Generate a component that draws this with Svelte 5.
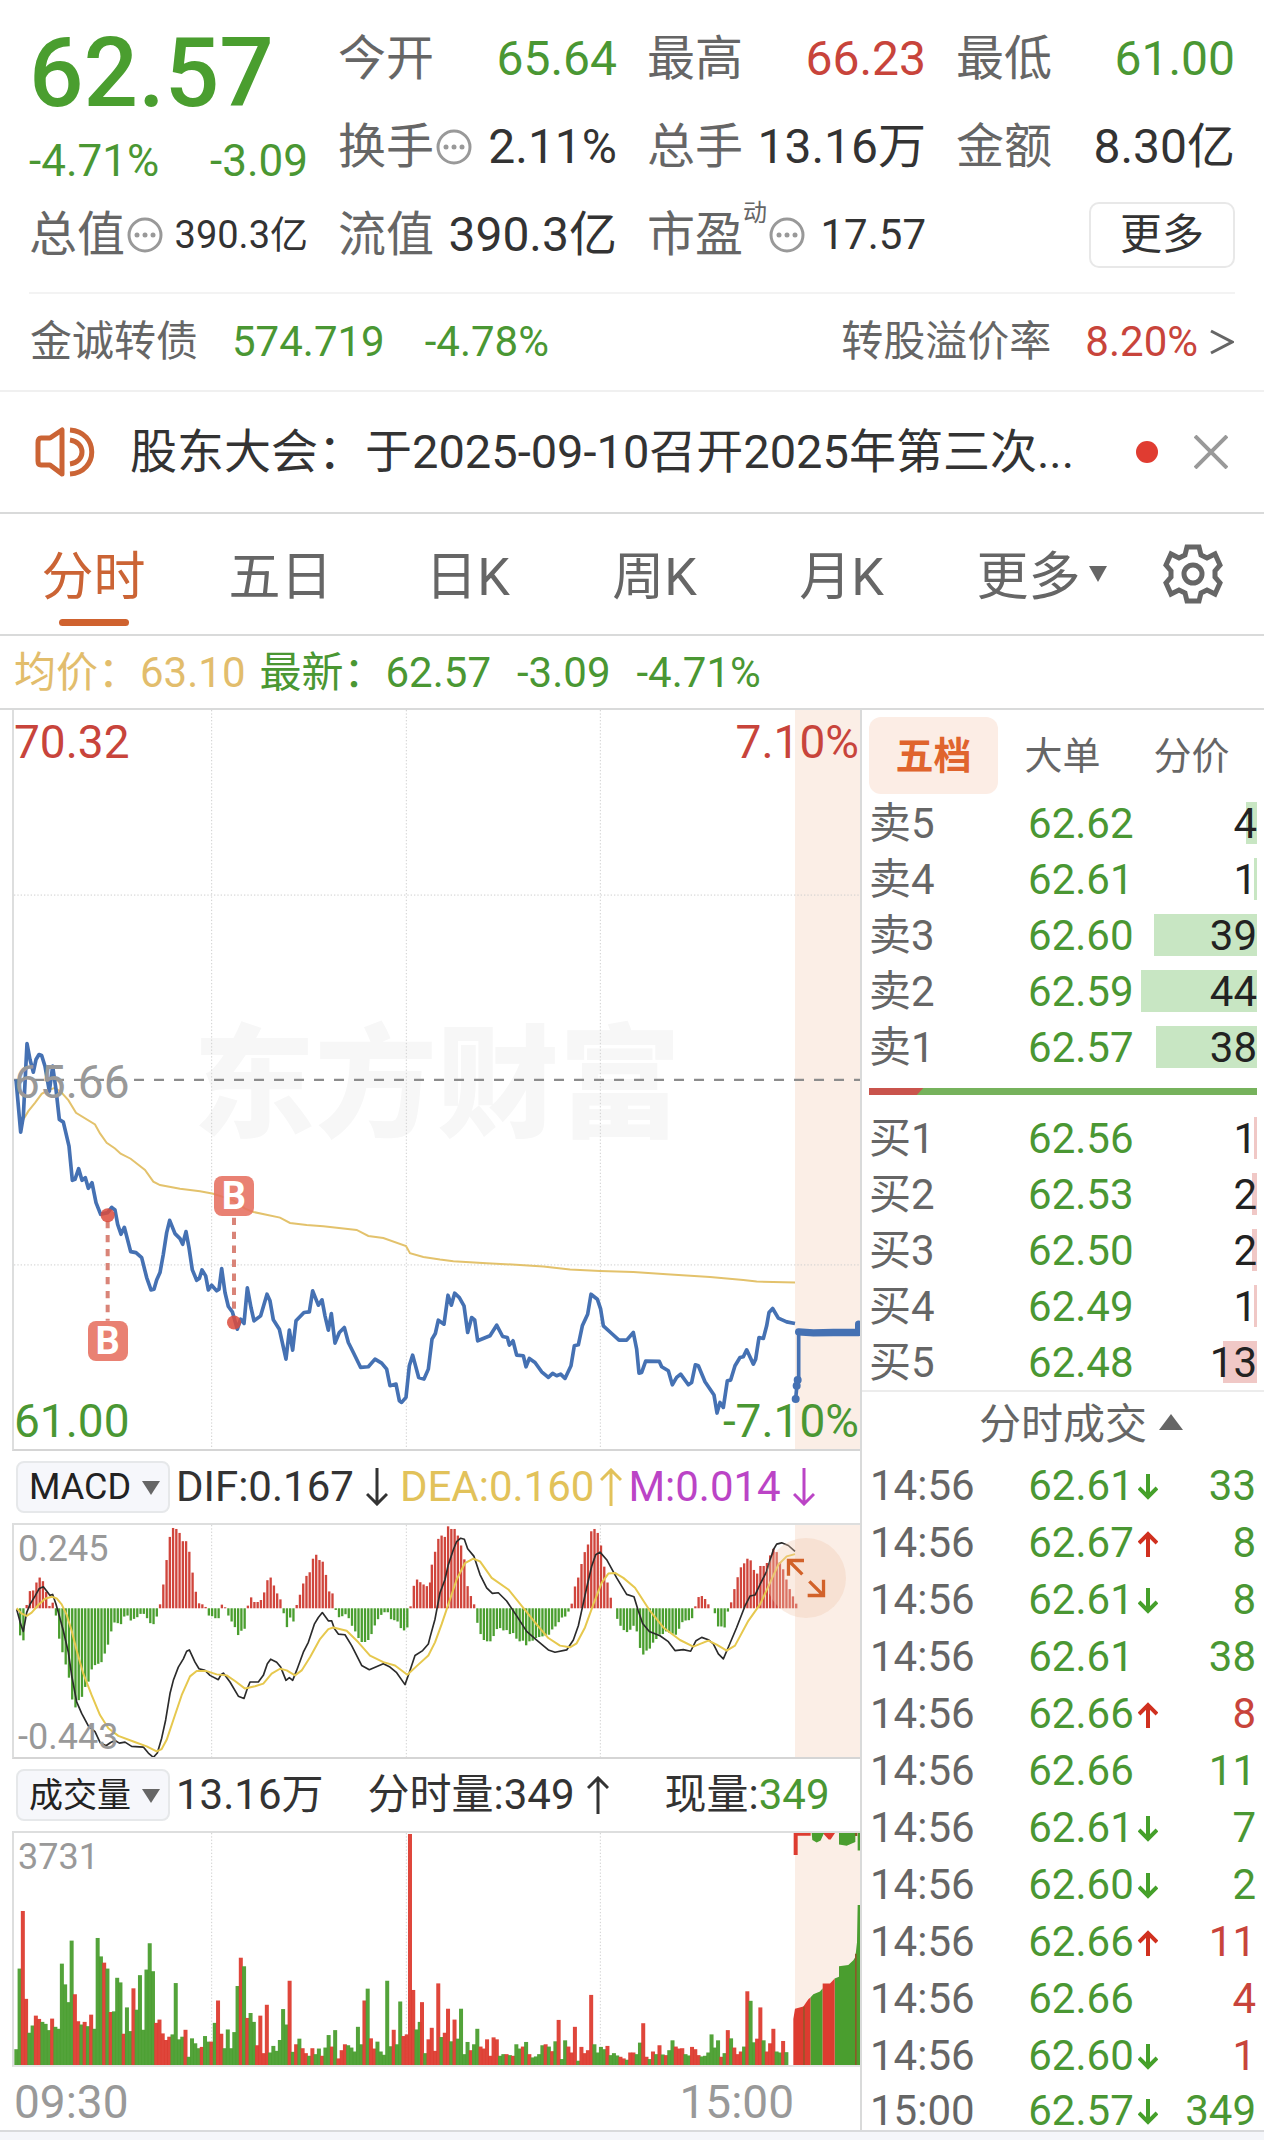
<script>
  const periods = ['分时', '五日', '日K', '周K', '月K'];
  const bookTabs = ['五档', '大单', '分价'];

  const asks = [
    { label: '卖5', price: '62.62', qty: 4 },
    { label: '卖4', price: '62.61', qty: 1 },
    { label: '卖3', price: '62.60', qty: 39 },
    { label: '卖2', price: '62.59', qty: 44 },
    { label: '卖1', price: '62.57', qty: 38 }
  ];
  const bids = [
    { label: '买1', price: '62.56', qty: 1 },
    { label: '买2', price: '62.53', qty: 2 },
    { label: '买3', price: '62.50', qty: 2 },
    { label: '买4', price: '62.49', qty: 1 },
    { label: '买5', price: '62.48', qty: 13 }
  ];
  const deepest = 44;

  const trades = [
    { time: '14:56', price: '62.61', move: 'fall', qty: 33, side: 'down' },
    { time: '14:56', price: '62.67', move: 'rise', qty: 8, side: 'down' },
    { time: '14:56', price: '62.61', move: 'fall', qty: 8, side: 'down' },
    { time: '14:56', price: '62.61', move: '', qty: 38, side: 'down' },
    { time: '14:56', price: '62.66', move: 'rise', qty: 8, side: 'up' },
    { time: '14:56', price: '62.66', move: '', qty: 11, side: 'down' },
    { time: '14:56', price: '62.61', move: 'fall', qty: 7, side: 'down' },
    { time: '14:56', price: '62.60', move: 'fall', qty: 2, side: 'down' },
    { time: '14:56', price: '62.66', move: 'rise', qty: 11, side: 'up' },
    { time: '14:56', price: '62.66', move: '', qty: 4, side: 'up' },
    { time: '14:56', price: '62.60', move: 'fall', qty: 1, side: 'up' },
    { time: '15:00', price: '62.57', move: 'fall', qty: 349, side: 'down' }
  ];

  // Chart samples are stored in thirds of a chart unit; the afternoon half starts at x = 1260.
  const AFTERNOON = 1260;
  const join = (am, pm) => {
    const read = (s, dx) => s.split(' ').map((p) => {
      const [x, y] = p.split(',').map(Number);
      return `${x + dx},${y}`;
    });
    return [...read(am, 0), ...read(pm, AFTERNOON)].join(' ');
  };

  const price = join(
    '48,240 62,398 70,350 81,132 90,180 100,218 108,180 117,165 125,168 135,200 148,275 158,200 168,270 178,360 190,368 207,440 217,543 225,540 236,508 246,543 256,535 265,567 276,550 288,610 302,645 323,640 335,624 345,632 353,675 363,705 373,684 392,757 408,760 425,775 440,835 453,872 462,870 470,842 480,820 490,765 500,700 509,663 525,703 540,718 548,735 558,697 567,745 577,812 590,843 598,838 606,812 617,830 625,872 635,858 650,875 657,870 665,808 675,880 685,922 697,938 712,990 722,960 732,973 742,866 753,925 762,965 782,950 801,885 810,905 820,962 838,990 848,1035 858,1080 868,993 878,1053 888,965 912,940 928,938 938,875 955,918 966,902 975,950 985,993 994,943 1005,1032 1018,1000 1033,985 1045,1030 1060,1060 1082,1105 1105,1103 1125,1080 1145,1092 1160,1110 1170,1160 1188,1155 1198,1205 1205,1210 1218,1195 1228,1100 1238,1068 1256,1135 1272,1140 1285,1110',
    '36,1020 46,1003 55,963 72,975 84,888 94,918 104,882 118,895 132,920 143,1000 155,955 164,962 173,1025 210,1010 230,978 248,1012 262,1015 268,1038 279,1025 290,1068 310,1070 318,1103 328,1078 345,1090 365,1118 385,1135 398,1123 410,1130 422,1125 435,1138 453,1100 463,1040 475,1037 487,980 503,945 513,885 532,900 542,930 550,980 575,1003 597,1023 620,1023 640,1000 650,1050 657,1122 665,1120 677,1086 718,1087 725,1103 745,1115 757,1157 770,1135 782,1125 805,1157 815,1150 826,1097 835,1100 855,1148 882,1188 891,1242 900,1210 910,1225 922,1145 932,1143 945,1100 960,1075 970,1073 980,1052 1000,1095 1007,1080 1017,1015 1030,1018 1040,980 1047,940 1058,928 1075,957 1100,968 1125,973'
  );
  const average = join(
    '70,360 85,335 105,310 125,283 145,272 165,265 185,280 205,302 228,340 285,375 300,402 320,430 345,447 362,463 392,478 435,512 460,547 480,557 540,568 600,576 640,583 700,603 735,628 760,638 840,655 870,671 920,677 970,681 1070,692 1105,710 1150,716 1218,740 1230,762 1270,773',
    '60,781 100,786 200,792 300,797 370,802 450,811 540,815 640,818 740,825 870,833 970,842 1010,847 1125,850'
  );
  const dif = join(
    '50,505 62,550 70,572 80,515 90,490 105,465 118,442 130,437 140,450 150,463 158,460 168,490 178,525 190,570 205,635 215,705 230,785 245,820 265,858 285,875 300,908 318,918 332,908 345,902 358,910 375,907 395,920 430,922 445,940 460,953 472,940 485,895 497,840 510,760 520,720 535,680 550,655 560,632 568,628 585,665 597,685 615,690 630,705 655,718 663,703 670,698 690,725 715,768 732,775 742,745 750,725 775,725 790,705 802,670 812,656 830,665 842,680 858,720 868,712 878,720 890,690 910,635 925,605 943,550 955,530 967,515 985,540 995,540 1003,563 1015,580 1035,582 1055,615 1085,675 1108,688 1150,670 1170,680 1190,697 1215,733 1230,690 1245,645 1268,630 1285,610',
    '30,590 45,535 60,455 75,415 85,370 100,325 110,300 122,290 133,293 143,322 162,345 180,400 200,440 217,457 235,455 260,480 290,525 320,572 350,598 385,628 405,635 440,628 460,598 475,555 487,500 500,440 515,375 527,340 540,332 560,355 590,410 620,460 642,467 655,510 668,548 688,572 720,585 745,603 765,630 790,627 812,632 828,600 845,590 865,597 880,610 895,640 910,655 925,620 950,560 975,495 990,465 1005,462 1020,430 1040,390 1060,325 1070,308 1085,304 1105,312 1125,330'
  );
  const dea = join(
    '50,502 65,518 80,525 95,515 115,492 135,473 155,467 170,472 185,490 200,522 215,570 230,630 250,700 275,765 300,825 325,865 355,888 400,905 440,920 470,935 485,928 500,900 520,840 545,765 570,708 590,692 620,692 650,702 680,705 705,722 735,745 765,738 790,730 815,700 840,685 860,690 885,705 905,690 930,650 960,595 985,565 1000,560 1040,570 1075,605 1110,645 1150,665 1185,675 1222,703 1250,677',
    '25,645 45,605 65,550 85,490 110,415 135,365 160,352 180,360 215,410 265,445 305,495 345,545 385,592 420,615 450,620 470,608 495,560 520,490 545,425 565,397 585,395 610,410 645,440 690,510 730,560 780,598 820,618 865,600 890,612 920,630 945,615 985,540 1020,490 1050,425 1075,370 1100,345 1125,338'
  );

  const STEP = 9.76;
  const macdMorning = [-82, -97, 10, 52, 54, 78, 93, 82, 50, 7, 17, -22, -92, -133, -170, -210, -276, -300, -278, -268, -238, -222, -185, -172, -168, -163, -137, -110, -70, -43, -45, -48, -25, -22, -37, -32, -27, -17, -17, -30, -45, -48, -25, 12, 72, 146, 216, 243, 240, 228, 203, 203, 171, 108, 50, 15, 12, 4, -22, -24, -30, -30, 11, 3, -22, -40, -57, -81, -68, -62, 8, 33, 19, 19, 25, 48, 85, 93, 69, 45, 27, -15, -57, -28, -40, 10, 41, 75, 98, 109, 150, 162, 146, 141, 101, 51, 45, -5, -27, -24, -18, -30, -53, -70, -90, -102, -102, -96, -78, -52, -33, -20, -12, -12, -33, -36, -40, -60, -67, -58, 6, 68, 87, 79, 72, 67, 78];
  const macdAfternoon = [132, 171, 210, 220, 216, 248, 240, 240, 220, 190, 148, 67, 37, 12, -44, -78, -96, -100, -100, -84, -63, -60, -67, -66, -78, -75, -92, -100, -98, -112, -100, -98, -90, -87, -85, -83, -80, -64, -55, -42, -28, -25, -10, 14, 66, 93, 134, 170, 193, 233, 240, 228, 190, 126, 78, 32, 0, -32, -53, -66, -72, -65, -53, -70, -120, -140, -128, -122, -104, -93, -80, -78, -70, -74, -77, -80, -62, -42, -37, -36, -30, 6, 34, 37, 28, 12, 0, -15, -55, -55, -58, -10, 18, 58, 94, 124, 136, 150, 145, 116, 105, 128, 128, 137, 160, 180, 170, 140, 118, 87, 58, 36, 14];
  const histogram = [
    ...macdMorning.map((v, i) => ({ x: 61 + i * STEP, v })),
    ...macdAfternoon.map((v, i) => ({ x: AFTERNOON + 36 + i * STEP, v }))
  ];

  const readVolume = (s, start) => s.split(' ').map((t, i) => ({
    x: start + i * STEP,
    top: Number(t.slice(1)),
    up: t[0] === 'r'
  }));
  const volume = [
    ...readVolume('g870 g625 r450 r717 g820 g798 r768 r778 g787 g793 g812 r777 g802 g808 g610 g673 g727 g540 r703 r785 g795 r787 g800 r765 g808 g532 g588 r607 g625 r757 g755 g653 g667 r823 g743 g815 r685 g750 g645 g811 g628 g548 g633 r790 r780 r822 r842 r832 g825 g669 g840 g832 r811 g893 g837 g852 g867 r863 g830 g847 r847 g790 r722 r823 g867 g810 g867 g818 g678 r592 g618 r775 g760 g787 r858 r768 r882 r735 g880 g860 g875 g842 g748 g795 r662 g878 r855 g838 r867 r882 g890 r867 g885 g868 r890 g865 g827 r862 g812 r898 r873 r855 g858 g865 g877 g802 g855 r722 g686 r837 r868 g847 g877 g887 g662 g861 r811 g855 g725 r830 r825 r216 r690 g810 g787', 49),
    ...readVolume('r727 g882 r840 r805 r875 r670 g833 r820 r747 g846 r780 g838 g747 g885 g848 r873 g855 g808 r862 r868 r840 r890 r834 r840 g890 g885 r885 g888 r890 g855 g868 r862 g848 r885 g895 g892 g885 g858 r855 g862 r876 g846 r781 g900 g843 r862 r880 r802 g905 r863 r882 r873 r705 g855 g880 g863 g870 r860 g888 g882 g889 r893 r898 g902 r880 r880 g885 g850 r791 r893 g900 r877 g885 r858 g886 r888 g873 g843 r862 r868 r867 g885 g889 r863 r870 r888 g892 g890 g880 g825 g865 g843 r893 g882 r812 g837 r865 r885 r877 g862 r694 g723 g849 r838 r743 g843 r877 r852 r808 g877 g880 r845 g879', AFTERNOON + 6)
  ];

  const gridColumns = [635, 1219, 1801];
  const buys = [
    { x: 323, dot: 648, badge: 1025, from: 665, to: 965 },
    { x: 702, dot: 970, badge: 591, from: 655, to: 945 }
  ];
  const percentX = (x) => ((x - 42) / 2538) * 100;
  const percentY = (y) => ((y + 870) / 2220) * 100;
</script>

{#snippet more()}
  <svg class="dots" viewBox="0 0 36 36" aria-hidden="true">
    <circle cx="18" cy="18" r="16" fill="none" stroke="currentColor" stroke-width="3" />
    <circle cx="10" cy="18" r="2.5" fill="currentColor" />
    <circle cx="18" cy="18" r="2.5" fill="currentColor" />
    <circle cx="26" cy="18" r="2.5" fill="currentColor" />
  </svg>
{/snippet}

{#snippet arrow(rise)}
  <svg class="arrow" viewBox="0 0 22 38" fill="none" stroke="currentColor" stroke-width="3" aria-hidden="true">
    {#if rise}
      <path d="M11 38V2M1 12 11 2 21 12" />
    {:else}
      <path d="M11 0V36M1 26 11 36 21 26" />
    {/if}
  </svg>
{/snippet}

{#snippet depth(rows, side)}
  <table class="book">
    <tbody>
      {#each rows as row}
        <tr>
          <th scope="row">{row.label}</th>
          <td class="down">{row.price}</td>
          <td class="qty">
            <span class="bar {side}" style:width="{(row.qty / deepest) * 100}%"></span>
            <span class="num">{row.qty}</span>
          </td>
        </tr>
      {/each}
    </tbody>
  </table>
{/snippet}

<main>
  <header class="quote">
    <div class="headline">
      <strong>62.57</strong>
      <div class="change"><span>-4.71%</span><span>-3.09</span></div>
    </div>
    <div class="cell"><span>今开</span><b class="down">65.64</b></div>
    <div class="cell"><span>最高</span><b class="up">66.23</b></div>
    <div class="cell"><span>最低</span><b class="down">61.00</b></div>
    <div class="cell"><span>换手</span>{@render more()}<b>2.11%</b></div>
    <div class="cell"><span>总手</span><b>13.16万</b></div>
    <div class="cell"><span>金额</span><b>8.30亿</b></div>
    <div class="cell"><span>总值</span>{@render more()}<b class="small">390.3亿</b></div>
    <div class="cell"><span>流值</span><b>390.3亿</b></div>
    <div class="cell"><span>市盈</span><sup>动</sup>{@render more()}<b class="medium">17.57</b></div>
    <div class="cell end"><button class="outline" type="button">更多</button></div>
  </header>

  <a class="bond" href="#bond">
    <span>金诚转债</span>
    <span class="down">574.719</span>
    <span class="down">-4.78%</span>
    <span class="premium">转股溢价率</span>
    <span class="up">8.20%</span>
    <svg viewBox="0 0 24 28" fill="none" stroke="currentColor" stroke-width="3" aria-hidden="true"><path d="M1 3 22 14 1 25" /></svg>
  </a>

  <section class="news">
    <svg class="speaker" viewBox="0 0 60 50" fill="none" stroke="currentColor" stroke-width="5" stroke-linejoin="round" aria-hidden="true">
      <path d="M27 3V47L15 38H6Q3 38 3 34V16Q3 11 6 11H15Z" />
      <path d="M35 3C64 5 64 45 35 47M35 13C51 15 51 35 35 37" />
    </svg>
    <a href="#notice">股东大会：于2025-09-10召开2025年第三次...</a>
    <i class="unread"></i>
    <button type="button" aria-label="关闭">
      <svg viewBox="0 0 34 34" stroke="currentColor" stroke-width="4" aria-hidden="true"><path d="M1 1 33 33M33 1 1 33" /></svg>
    </button>
  </section>

  <nav class="periods">
    {#each periods as p, i}
      <button type="button" class:active={i === 0}>{p}</button>
    {/each}
    <button type="button" class="others">更多<svg viewBox="0 0 18 16" aria-hidden="true"><path d="M0 0H18L9 16Z" fill="currentColor" /></svg></button>
    <button type="button" class="gear" aria-label="设置">
      <svg viewBox="-30 -30 60 60" fill="none" stroke="currentColor" stroke-width="5" aria-hidden="true">
        <path d="M-6-27H6L8-19 14-16 22-20 27-9 22-3V3L27 9 22 20 14 16 8 19 6 27H-6L-8 19-14 16-22 20-27 9-22 3V-3L-27-9-22-20-14-16-8-19Z" />
        <circle r="9" />
      </svg>
    </button>
  </nav>

  <p class="latest">
    <span class="avg">均价：63.10</span>
    <span class="down">最新：62.57</span>
    <span class="down step">-3.09</span>
    <span class="down step">-4.71%</span>
  </p>

  <div class="board">
    <section class="charts">
      <div class="plot main">
        <div class="watermark">东方财富</div>
        <svg viewBox="42 -870 2538 2220" preserveAspectRatio="none" fill="none" aria-hidden="true">
          <rect x="2385" y="-870" width="195" height="2220" fill="#fbeee6" />
          <g stroke="#cfcfcf" stroke-width="3" stroke-dasharray="4 6">
            {#each gridColumns as x}<path d="M{x} -870V1350" />{/each}
            <path d="M42 -314H2580M42 797H2580" />
          </g>
          <path d="M42 241H2580" stroke="#8c8c8c" stroke-width="7" stroke-dasharray="30 30" />
          <polyline points={average} stroke="#e3c26c" stroke-width="6" />
          <polyline points={price} stroke="#4571b3" stroke-width="11" stroke-linejoin="round" />
          <path d="M2387 1200 2392 1145 2396 1136V1000" stroke="#4571b3" stroke-width="11" />
          <path d="M2396 998 2440 1001 2500 1000 2576 1000M2576 1000V975" stroke="#4571b3" stroke-width="22" stroke-linecap="round" />
          <g fill="#4571b3"><circle cx="2387" cy="1200" r="12" /><circle cx="2390" cy="1160" r="12" /><circle cx="2393" cy="1143" r="12" /></g>
          {#each buys as b}
            <path d="M{b.x} {b.from}V{b.to}" stroke="#d98478" stroke-width="12" stroke-dasharray="22 20" />
            <circle cx={b.x} cy={b.dot} r="21" fill="#dc4b3c" fill-opacity="0.85" />
          {/each}
        </svg>
        {#each buys as b}
          <span class="badge" style:left="{percentX(b.x)}%" style:top="{percentY(b.badge)}%">B</span>
        {/each}
        <span class="tick top left up">70.32</span>
        <span class="tick top right up">7.10%</span>
        <span class="tick middle left">65.66</span>
        <span class="tick bottom left down">61.00</span>
        <span class="tick bottom right down">-7.10%</span>
      </div>

      <div class="legend">
        <select class="latin" aria-label="指标"><option>MACD</option></select>
        <span class="entry">DIF:0.167{@render arrow(false)}</span>
        <span class="entry yellow">DEA:0.160{@render arrow(true)}</span>
        <span class="entry purple">M:0.014{@render arrow(false)}</span>
      </div>

      <div class="plot sub">
        <svg viewBox="42 250 2538 702" preserveAspectRatio="none" fill="none" aria-hidden="true">
          <rect x="2385" y="250" width="195" height="702" fill="#fbeee6" />
          <g stroke="#cfcfcf" stroke-width="3" stroke-dasharray="4 6">
            {#each gridColumns as x}<path d="M{x} 250V952" />{/each}
          </g>
          {#each histogram as h}
            <rect x={h.x - 4} y={h.v > 0 ? 502 - h.v : 502} width="7" height={Math.abs(h.v)} fill={h.v > 0 ? '#d0453c' : '#4a9e2f'} />
          {/each}
          <polyline points={dif} stroke="#2b2b2b" stroke-width="5" stroke-linejoin="round" />
          <polyline points={dea} stroke="#e6c84e" stroke-width="6" stroke-linejoin="round" />
        </svg>
        <span class="scale high">0.245</span>
        <span class="scale low">-0.443</span>
        <button class="expand" type="button" aria-label="放大">
          <svg viewBox="1036 292 242 242" fill="none" stroke="#d2622a" stroke-width="10" aria-hidden="true">
            <path d="M1151 360H1104V406M1104 360 1146 402M1162 466H1210V418M1210 466 1167 423" />
          </svg>
        </button>
      </div>

      <div class="legend">
        <select aria-label="副图"><option>成交量</option></select>
        <span class="entry">13.16万</span>
        <span class="entry minute">分时量:349{@render arrow(true)}</span>
        <span class="entry current">现量:<span class="down">349</span></span>
      </div>

      <div class="plot sub volume">
        <svg viewBox="42 213 2538 705" preserveAspectRatio="none" fill="none" aria-hidden="true">
          <rect x="2385" y="213" width="195" height="705" fill="#fbeee6" />
          <g stroke="#cfcfcf" stroke-width="3" stroke-dasharray="4 6">
            {#each gridColumns as x}<path d="M{x} 213V918" />{/each}
          </g>
          {#each volume as v}
            <rect x={v.x - 6} y={v.top} width="12" height={918 - v.top} fill={v.up ? '#dd3c30' : '#4a9e2f'} fill-opacity="0.95" />
          {/each}
          <g transform="translate(1260 0)">
            <path fill="#dd3c30" d="M1120 918V778L1125 747 1150 740 1165 718 1172 712V918ZM1121 213H1133V280H1121ZM1133 213H1172V221H1133ZM1208 213H1245L1232 233H1226Z" />
            <path fill="#4a9e2f" d="M1172 918V712L1180 703 1200 695 1208 685V918ZM1244 918V655L1257 650V618L1285 614 1300 600 1306 590 1311 545 1313 432H1320V918ZM1175 213H1212L1202 236 1190 242 1177 234ZM1257 213H1306V240L1280 252 1257 248ZM1313 213H1320V266H1313Z" />
            <path fill="#dd3c30" d="M1208 918V670H1230L1244 655V918Z" />
            <path fill="#8a5a28" d="M1150 918V740H1154V918ZM1305 918V580H1310V918ZM1305 213H1312V222H1305Z" />
          </g>
        </svg>
        <span class="scale high">3731</span>
      </div>
      <div class="times"><span>09:30</span><span>15:00</span></div>
    </section>

    <aside>
      <div class="tabs">
        {#each bookTabs as t, i}
          <button type="button" class:active={i === 0}>{t}</button>
        {/each}
      </div>
      {@render depth(asks, 'ask')}
      <div class="ratio"><i></i></div>
      {@render depth(bids, 'bid')}
      <button type="button" class="title">分时成交<svg viewBox="0 0 24 16" aria-hidden="true"><path d="M12 0 24 16H0Z" fill="currentColor" /></svg></button>
      <div class="trades">
        <table>
          <tbody>
            {#each trades as t}
              <tr>
                <th scope="row">{t.time}</th>
                <td class="down">
                  {t.price}{#if t.move}<svg class={t.move} viewBox="0 0 20 26" fill="none" stroke="currentColor" stroke-width="4" aria-hidden="true"><path d={t.move === 'rise' ? 'M10 26V3M1 12 10 3 19 12' : 'M10 0V23M1 14 10 23 19 14'} /></svg>{/if}
                </td>
                <td class="qty {t.side}">{t.qty}</td>
              </tr>
            {/each}
          </tbody>
        </table>
      </div>
    </aside>
  </div>
</main>

<style>
  :global(body) { background: #f5f6fa; }
  * { box-sizing: border-box; }
  main {
    background: #fff;
    color: #333;
    font-family: Roboto, "Noto Sans CJK SC", sans-serif;
    font-size: 42px;
    line-height: 60px;
    border-bottom: 2px solid #d9dadc;
  }
  button { font: inherit; color: inherit; background: none; border: 0; padding: 0; cursor: pointer; }
  a { color: inherit; text-decoration: none; }
  svg { display: block; flex: none; }
  .down { color: #4a9733; }
  .up { color: #c8443b; }

  .quote {
    display: grid;
    grid-template-columns: repeat(4, minmax(0, 1fr));
    grid-auto-rows: 88px;
    column-gap: 30px;
    margin: 0 29px;
    padding: 15px 0 13px;
    border-bottom: 2px solid #f3f3f3;
    white-space: nowrap;
  }
  .headline { grid-row: span 2; color: #4a9e2f; }
  .headline strong { display: block; font-size: 96px; font-weight: 500; line-height: 116px; }
  .change { display: flex; justify-content: space-between; font-size: 44px; line-height: 60px; color: #4a9733; }
  .cell { display: flex; align-items: center; font-size: 48px; line-height: 88px; color: #666; }
  .cell b { margin-left: auto; font-weight: 400; color: #333; }
  .cell b.down { color: #4a9733; }
  .cell b.up { color: #c8443b; }
  .cell .medium { font-size: 42px; }
  .cell .small { font-size: 38px; }
  .cell sup { align-self: flex-start; font-size: 24px; line-height: 44px; }
  .dots { width: 36px; height: 36px; margin-left: 2px; color: #999; }
  .end { justify-content: flex-end; }
  .outline { width: 146px; height: 66px; border: 2px solid #e8e8e8; border-radius: 10px; font-size: 42px; line-height: 60px; color: #333; }

  .bond { display: flex; align-items: center; height: 98px; padding: 0 30px; border-bottom: 2px solid #f0f0f0; color: #666; white-space: nowrap; }
  .bond span + span { margin-left: 34px; }
  .bond .down + .down { margin-left: 40px; }
  .bond .premium { margin-left: auto; }
  .bond svg { width: 24px; height: 28px; margin-left: 12px; }

  .news { display: flex; align-items: center; height: 122px; padding: 0 36px 0 35px; border-bottom: 2px solid #d9dada; font-size: 47px; }
  .speaker { width: 60px; height: 50px; color: #cb6435; }
  .news a { flex: 1; margin-left: 35px; min-width: 0; overflow: hidden; white-space: nowrap; }
  .unread { width: 22px; height: 22px; border-radius: 50%; background: #e03c31; }
  .news button { margin-left: 36px; color: #999; }
  .news button svg { width: 34px; height: 34px; }

  .periods { display: flex; height: 122px; border-bottom: 2px solid #d9dada; color: #666; font-size: 52px; }
  .periods button { position: relative; flex: 187 1 0; display: flex; align-items: center; justify-content: center; padding-top: 8px; }
  .periods .gear { flex-grow: 142; padding-top: 0; }
  .periods .active { color: #cb6435; }
  .periods .active::after { content: ""; position: absolute; left: 50%; bottom: 8px; width: 70px; height: 7px; margin-left: -35px; border-radius: 4px; background: #cf622f; }
  .others svg { width: 18px; height: 16px; margin: 0 -26px 8px 8px; }
  .gear svg { width: 60px; height: 60px; }

  .latest { display: flex; gap: 14px; height: 74px; margin: 0; padding-left: 14px; border-bottom: 2px solid #d9dada; line-height: 74px; white-space: nowrap; }
  .latest .avg { color: #e2bd6c; }
  .latest .step { margin-left: 12px; }

  .board { display: grid; grid-template-columns: minmax(0, 862fr) minmax(0, 402fr); }
  .charts { border-right: 2px solid #d9dada; padding-left: 12px; }
  .plot { position: relative; border-left: 2px solid #dddede; border-bottom: 2px solid #d5d5d5; }
  .plot > svg { position: relative; width: 100%; height: 100%; }
  .main { height: 741px; }
  .sub { height: 236px; border-top: 2px solid #dddede; }
  .volume { border-bottom-color: #e5e5e5; }
  .watermark { position: absolute; inset: 0; display: flex; align-items: center; justify-content: center; padding-top: 12px; font-size: 122px; font-weight: 900; color: #f7f7f7; }
  .tick { position: absolute; font-size: 46px; line-height: 60px; color: #999; }
  .tick.up { color: #c8443b; }
  .tick.down { color: #4a9733; }
  .left { left: 0; }
  .right { right: 1px; }
  .top { top: 2px; }
  .middle { top: 342px; }
  .bottom { bottom: -2px; }
  .scale { position: absolute; left: 4px; font-size: 36px; line-height: 44px; color: #999; }
  .high { top: 2px; }
  .low { bottom: -2px; }
  .badge { position: absolute; width: 40px; height: 40px; margin: -20px 0 0 -20px; border-radius: 8px; background: rgba(230, 112, 96, 0.88); color: #fff; font-size: 38px; font-weight: 700; line-height: 40px; text-align: center; }
  .expand { position: absolute; right: 14px; top: 13px; width: 80px; height: 80px; border-radius: 50%; background: rgba(240, 200, 175, 0.35); }
  .expand svg { width: 80px; height: 80px; }

  .legend { position: relative; display: flex; align-items: center; height: 72px; padding-left: 4px; white-space: nowrap; }
  .legend select {
    appearance: none;
    width: 154px;
    height: 52px;
    margin-right: 6px;
    padding: 0 0 0 11px;
    border: 2px solid #e6e8ea;
    border-radius: 8px;
    background: #f6f7fb;
    color: #222;
    font-family: inherit;
    font-size: 34px;
  }
  .legend .latin { font-size: 36px; }
  .legend::after { content: ""; position: absolute; left: 130px; top: 30px; border: solid transparent; border-width: 14px 9px 0; border-top-color: #666; pointer-events: none; }
  .entry { display: flex; align-items: center; }
  .arrow { width: 22px; height: 38px; margin: 0 12px 0 12px; }
  .yellow .arrow { margin: 0 6px 0 6px; }
  .yellow { color: #e2c25a; }
  .purple { color: #bb44c6; }
  .minute { margin-left: 44px; }
  .current { margin-left: 44px; }
  .times { display: flex; justify-content: space-between; padding: 4px 66px 0 2px; font-size: 46px; line-height: 62px; height: 63px; color: #999; }

  aside { display: flex; flex-direction: column; min-width: 0; }
  .tabs { display: flex; height: 85px; padding: 7px 8px 1px 7px; color: #666; font-size: 38px; }
  .tabs button { flex: 1; border-radius: 12px; line-height: 76px; }
  .tabs .active { background: #fcede5; color: #e0642d; font-weight: 700; }
  table { width: 100%; border-collapse: collapse; table-layout: fixed; line-height: 58px; }
  th, td { padding: 0; font-weight: 400; text-align: left; white-space: nowrap; }
  th { width: 41%; color: #666; }
  td.qty { width: 30%; text-align: right; }
  .book { margin: 0 7px; width: auto; display: block; }
  .book tbody { display: block; }
  .book tr { display: flex; height: 56px; }
  .book th { flex: none; }
  .book td { flex: 1; }
  .book td.qty { position: relative; flex: none; color: #222; }
  .bar { position: absolute; right: 0; top: 7px; height: 42px; }
  .bar.ask { background: #c8e6c3; }
  .bar.bid { background: #f0c8c6; }
  .num { position: relative; }
  .ratio { height: 7px; margin: 13px 7px 15px; background: #76b25c; }
  .ratio i { display: block; width: 14%; height: 7px; background: #c9544c; clip-path: polygon(0 0, 100% 0, 88% 100%, 0 100%); }
  .title { display: flex; align-items: center; justify-content: center; gap: 12px; height: 67px; padding-left: 36px; border-top: 2px solid #ececec; color: #666; }
  .title svg { width: 24px; height: 16px; margin-bottom: 6px; }
  .trades { flex: 1 1 0; min-height: 0; padding: 0 8px; }
  .trades table { line-height: 57px; }
  .trades tr:last-child { line-height: 54px; }
  .trades td svg { display: inline-block; width: 20px; height: 26px; margin-left: 4px; }
  .fall { color: #45a02a; }
  .rise { color: #d0301f; }
</style>
